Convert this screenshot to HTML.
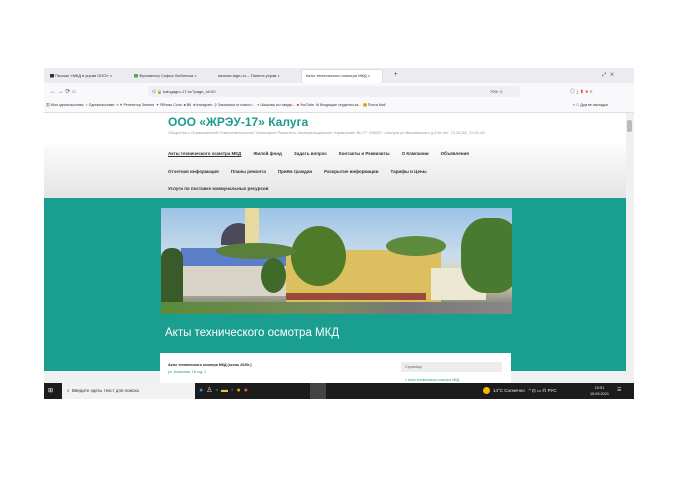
<!DOCTYPE html><html><head><meta charset="utf-8"><style>
*{margin:0;padding:0;box-sizing:border-box}
body{width:678px;height:480px;background:#fff;position:relative;overflow:hidden;font-family:"Liberation Sans","Noto Sans CJK SC",sans-serif}
.a{position:absolute}
.t{font-size:4px;color:#333;white-space:nowrap}
.m span{margin-right:12px}
</style></head><body>
<div class="a" style="left:44px;top:68px;width:590px;height:15px;background:#ececf0"></div>
<div class="a" style="left:302px;top:70px;width:80px;height:13px;background:#fff;border-radius:2px;box-shadow:0 0 1px #999"></div>
<div class="a t" style="left:50px;top:73px">▇ Письмо «МКД в управ ООО» ×</div>
<div class="a t" style="left:134px;top:73px;color:#5a5">▇<span style="color:#333"> Фрилансер Софья Любинска ×</span></div>
<div class="a t" style="left:218px;top:73px">мелкая-lagru.ru – Панель управ ×</div>
<div class="a t" style="left:306px;top:73px">Акты технического осмотра МКД ×</div>
<div class="a t" style="left:394px;top:72px;font-size:6px">+</div>
<div class="a t" style="left:602px;top:72px;font-size:5px">⤢ &nbsp;&nbsp;✕</div>
<div class="a" style="left:44px;top:83px;width:590px;height:16px;background:#f9f9fb"></div>
<div class="a t" style="left:50px;top:88px;font-size:6px;color:#555">← → ⟳ ⌂</div>
<div class="a" style="left:148px;top:86px;width:372px;height:11px;background:#f0f0f4;border-radius:3px"></div>
<div class="a t" style="left:152px;top:89px">⊙ 🔒 kalugagru-17.ru/?page_id=92</div>
<div class="a t" style="left:490px;top:89px">70% ☆</div>
<div class="a t" style="left:570px;top:88px;font-size:5px;color:#777">◎ ⤓ <span style="color:#e33">▮ ●</span> ≡</div>
<div class="a" style="left:44px;top:99px;width:590px;height:14px;background:#f9f9fb;border-bottom:1px solid #ddd"></div>
<div class="a t" style="left:46px;top:103px;font-size:3.6px">▦ Мои одноклассники &nbsp;<span style="color:#f80">●</span> Одноклассники &nbsp;<span style="color:#e42">●</span> ✦ Репетитор Знания &nbsp;✦ Яблоко Сочи &nbsp;<span style="color:#36c">■</span> ВК &nbsp;<span style="color:#c3a">■</span> Instagram &nbsp;⚲ Заказчики от нового... &nbsp;<span style="color:#d22">➜</span> Шашлык из говяди... &nbsp;<span style="color:#e22">■</span> YouTube &nbsp;M Входящие сердечно ка... &nbsp;<span style="color:#e90">▇</span> Почта Mail</div>
<div class="a t" style="left:573px;top:103px;font-size:3.6px">» ☐ Другие закладки</div>
<div class="a" style="left:44px;top:113px;width:582px;height:32px;background:#fff"></div>
<div class="a" style="left:168px;top:115px;font-size:12px;font-weight:bold;color:#1a9b8e;white-space:nowrap">ООО «ЖРЭУ-17» Калуга</div>
<div class="a t" style="left:168px;top:130px;font-size:4px;color:#999;width:330px;white-space:normal;line-height:5px">Общество с Ограниченной Ответственностью "Жилищное Ремонтно-Эксплуатационное Управление № 17" 248007, г.Калуга ул.Вишневского д.23а тел. 72-52-55, 72-51-63</div>
<div class="a" style="left:44px;top:145px;width:582px;height:53px;background:linear-gradient(#fbfbfb,#e4e4e4)"></div>
<div class="a t m" style="left:168px;top:151px;font-size:4.5px;font-weight:bold"><span><u>Акты технического осмотра МКД</u></span><span>Жилой фонд</span><span>Задать вопрос</span><span>Контакты и Реквизиты</span><span>О Компании</span><span>Объявления</span></div>
<div class="a t m" style="left:168px;top:169px;font-size:4.5px;font-weight:bold"><span>Отчетная информация</span><span>Планы ремонта</span><span>Приём граждан</span><span>Раскрытие информации</span><span>Тарифы и Цены</span></div>
<div class="a t" style="left:168px;top:186px;font-size:4.5px;font-weight:bold">Услуги по поставке коммунальных ресурсов</div>
<div class="a" style="left:44px;top:198px;width:582px;height:173px;background:#1a9e8f"></div>
<div class="a" style="left:161px;top:208px;width:351px;height:106px;overflow:hidden;background:linear-gradient(#9cc3e6,#c9dcec 45%,#d8d2b0 70%,#8a8a80 90%,#6c8a4a)">
 <div class="a" style="left:60px;top:15px;width:35px;height:22px;border-radius:18px 18px 0 0;background:#4a4a5a"></div>
 <div class="a" style="left:84px;top:0;width:14px;height:40px;background:#e8d9a0"></div>
 <div class="a" style="left:20px;top:40px;width:110px;height:20px;background:#5a7ec8"></div>
 <div class="a" style="left:20px;top:58px;width:110px;height:30px;background:#d8d4c8"></div>
 <div class="a" style="left:125px;top:42px;width:155px;height:52px;background:#dcc060"></div>
 <div class="a" style="left:125px;top:85px;width:140px;height:7px;background:#9a4a3a"></div>
 <div class="a" style="left:270px;top:60px;width:55px;height:32px;background:#ece8d4"></div>
 <div class="a" style="left:0;top:40px;width:22px;height:66px;background:#3a5a2a;border-radius:10px 10px 0 0"></div>
 <div class="a" style="left:130px;top:18px;width:55px;height:60px;border-radius:50%;background:#4f7a2a"></div>
 <div class="a" style="left:55px;top:35px;width:80px;height:16px;border-radius:50%;background:#5a7f3a"></div>
 <div class="a" style="left:300px;top:10px;width:60px;height:75px;border-radius:40%;background:#4a7a30"></div>
 <div class="a" style="left:225px;top:28px;width:60px;height:20px;border-radius:50%;background:#5d8a3c"></div>
 <div class="a" style="left:100px;top:50px;width:25px;height:35px;border-radius:50%;background:#3f6a2a"></div>
 <div class="a" style="left:0;top:94px;width:351px;height:12px;background:linear-gradient(90deg,#5a8a3a,#7a8a60 50%,#777 70%,#888)"></div>
</div>
<div class="a" style="left:165px;top:327px;font-size:11.5px;color:#fff;white-space:nowrap">Акты технического осмотра МКД</div>
<div class="a" style="left:160px;top:353px;width:351px;height:30px;background:#fff"></div>
<div class="a" style="left:44px;top:371px;width:116px;height:12px;background:#f0f0f0"></div>
<div class="a" style="left:511px;top:371px;width:115px;height:12px;background:#f0f0f0"></div>
<div class="a t" style="left:168px;top:363px;font-size:3.6px;font-weight:bold;color:#222">Акты технического осмотра МКД (осень 2020г.)</div>
<div class="a t" style="left:168px;top:370px;font-size:3.6px;color:#1a9e8f">ул. Ананьева, 16 год. 1</div>
<div class="a" style="left:401px;top:362px;width:101px;height:10px;background:#ececec"></div>
<div class="a t" style="left:405px;top:365px;font-size:3.6px;color:#666">Страницы</div>
<div class="a t" style="left:405px;top:378px;font-size:3.4px;color:#1a9e8f">» Акты технического осмотра МКД</div>
<div class="a" style="left:626px;top:113px;width:8px;height:270px;background:#f0f0f0"></div>
<div class="a" style="left:627px;top:120px;width:5px;height:12px;background:#bbb;border-radius:2px"></div>
<div class="a" style="left:44px;top:383px;width:590px;height:16px;background:#1c1c1c"></div>
<div class="a" style="left:62px;top:383px;width:133px;height:16px;background:#f2f2f2"></div>
<div class="a t" style="left:48px;top:387px;font-size:6px;color:#fff">⊞</div>
<div class="a t" style="left:67px;top:388px;font-size:4.5px;color:#333">⌕ &nbsp;Введите здесь текст для поиска</div>
<div class="a" style="left:310px;top:383px;width:16px;height:16px;background:#444"></div>
<div class="a t" style="left:199px;top:386px;font-size:7px;letter-spacing:3px"><span style="color:#2a8be0">●</span><span style="color:#ddd">♙</span><span style="color:#1d7a40">▪</span><span style="color:#f0c040">▬</span><span style="color:#2b5faa">▪</span><span style="color:#e4a020">●</span><span style="color:#f06020">●</span></div>
<div class="a" style="left:483px;top:387px;width:7px;height:7px;border-radius:50%;background:#f5b800"></div>
<div class="a t" style="left:493px;top:388px;font-size:4.5px;color:#eee">14°C Солнечно &nbsp; ^ ⊡ ▭ ☊ РУС</div>
<div class="a t" style="left:590px;top:385px;font-size:3.8px;color:#eee;text-align:center;line-height:6px">10:51<br>15.09.2021</div>
<div class="a t" style="left:617px;top:387px;font-size:5px;color:#eee">☰</div>
</body></html>
